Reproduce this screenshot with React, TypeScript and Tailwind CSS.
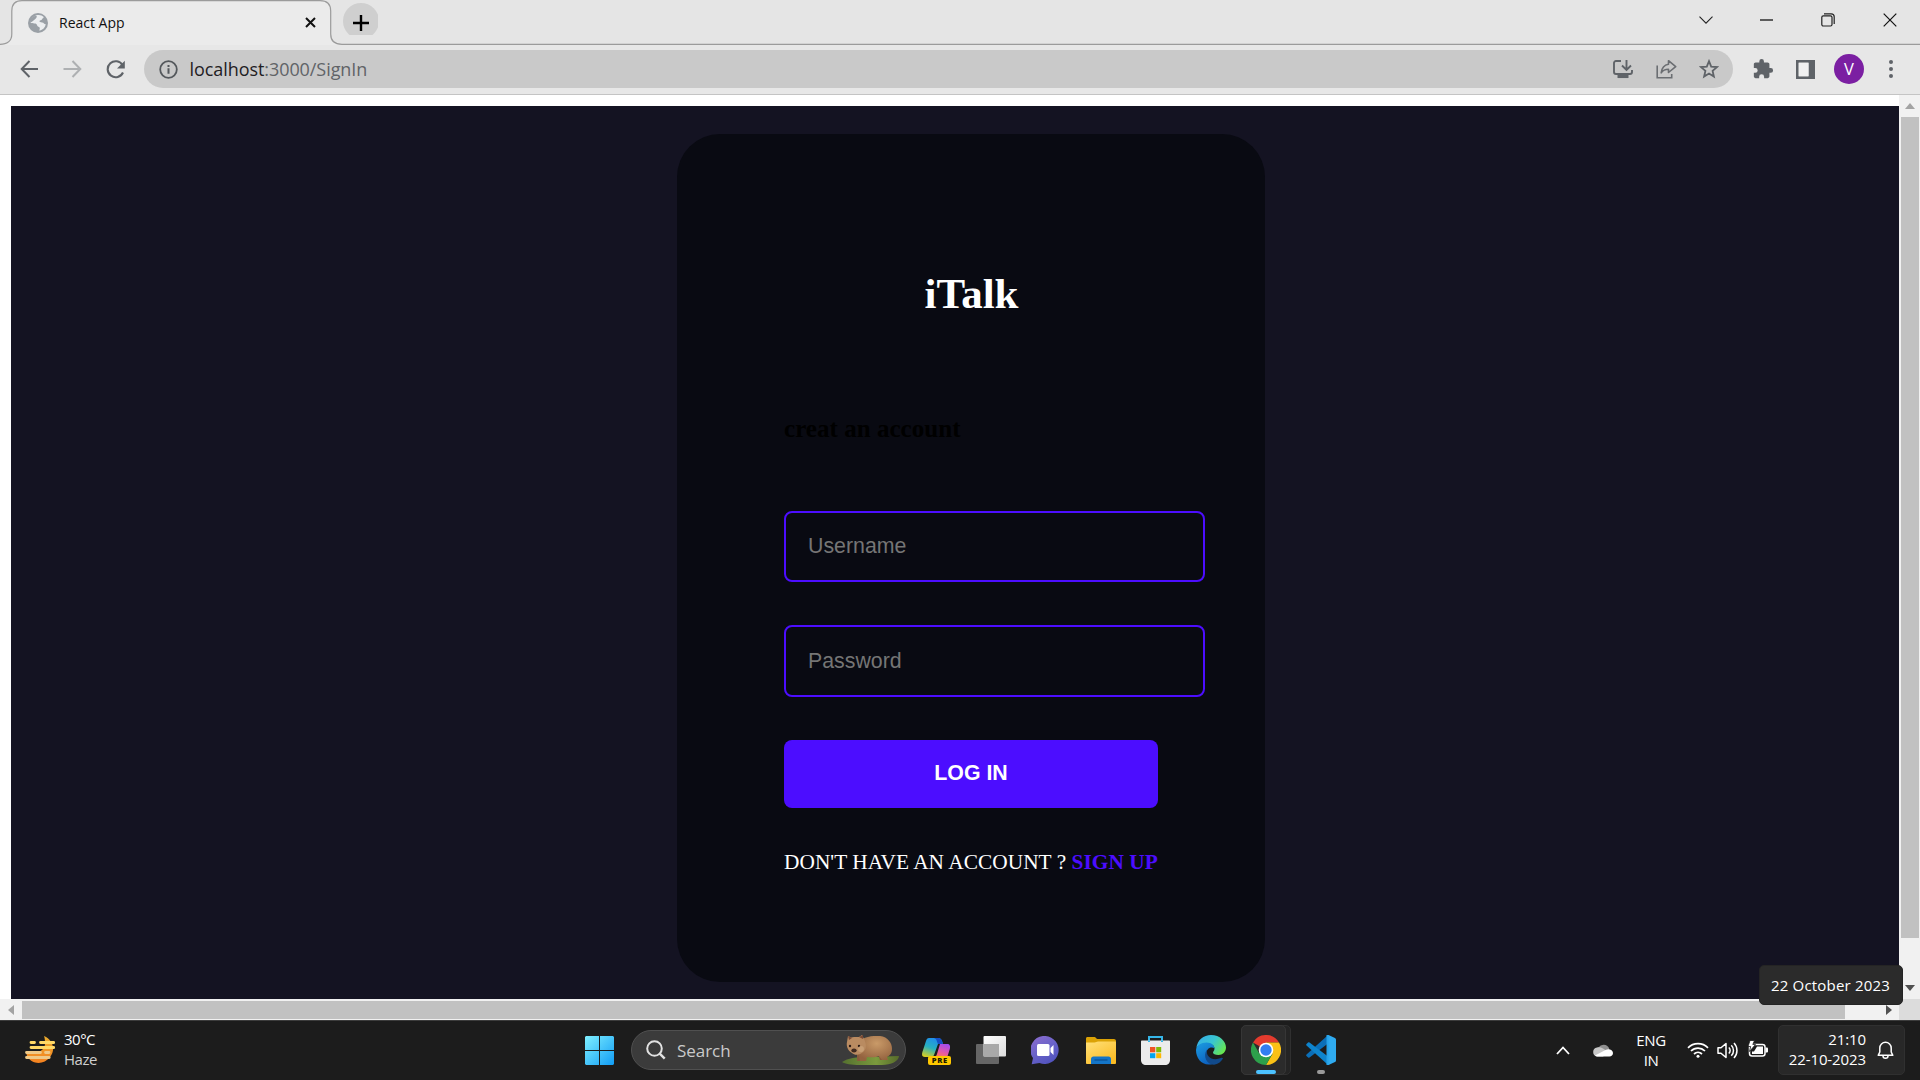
import React from "react";

const ui = "font-['Open_Sans','Noto_Sans',sans-serif]";

function TabStrip() {
  return (
    <div className="relative flex h-[45px] items-start bg-[#e5e5e5]">
      <svg className="absolute inset-0" width="1920" height="45" viewBox="0 0 1920 45">
        <path d="M0 44.5C7 44.5 11.8 41 11.8 34V11C11.8 4 15 .7 22 .7H320C327 .7 330.7 4 330.7 11V34C330.7 41 335 44.3 342 44.3H1920V45H0Z" fill="#ebebeb" />
        <path d="M0 44.3C7 44.3 11.8 41 11.8 34V11C11.8 4 15 .7 22 .7H320C327 .7 330.7 4 330.7 11V34C330.7 41 335 44.3 342 44.3H1920" fill="none" stroke="#9b9b9b" strokeWidth="1.2" />
      </svg>
      <div className="relative ml-[28px] flex h-[45px] w-[288px] items-center">
        <svg width="20" height="20" viewBox="0 0 20 20">
          <circle cx="10" cy="10" r="10" fill="#9aa0a6" />
          <path d="M8.3 2.3C11 1.4 14 2 15.7 4c-.4 1.6-1.300 1.200-1.800 2.500-.5 1.100-2 .6-2.400 1.600-.2 1 1 1.400 2.600 1.500 2 .2 1.800 1.700 3.700 1.600-.6 3.200-3 5.700-6.300 6.500-.3-1.200.600-2.100.2-3-.5-1-2.200-.6-2.500-2.100-.3-1.600-1-2.200-2.900-2.200-1.500 0-2.500-.2-3.900-.8C3 6.300 5 3.500 8.300 2.300Z" fill="#eceef0" />
          <path d="M8 2.500c1.500 1 .6 2.300-.2 2.900C6.600 6.300 5.600 7.500 4.600 8.200 3.600 8.700 3 9.400 2 9.400 2.400 6 4.600 3.400 8 2.500Z" fill="#9aa0a6" />
        </svg>
        <span className={`${ui} ml-[11px] text-[14px] tracking-[0px] text-[#111]`}>React App</span>
        <svg className="ml-auto" width="11" height="11" viewBox="0 0 11 11"><path d="M1 1l9 9M10 1l-9 9" stroke="#111" strokeWidth="2" /></svg>
      </div>
      <div className="relative ml-[27px] h-[35px] w-[35px] overflow-hidden">
        <svg className="mt-[3px]" width="35" height="32" viewBox="0 0 35 32"><circle cx="18" cy="18" r="18" fill="#cfcfcf" /></svg>
      </div>
      <svg className="relative -ml-[26px] mt-[14px]" width="18" height="18" viewBox="0 0 18 18"><path d="M9 1v16M1 9h16" stroke="#000" strokeWidth="2.4" /></svg>
      <div className="relative ml-auto mr-[23px] flex h-[39px] items-center">
        <svg width="14" height="8" viewBox="0 0 14 8"><path d="M.5 .7L7 7.200 13.500.7" fill="none" stroke="#222" strokeWidth="1.1" /></svg>
        <svg className="ml-[47px]" width="13" height="2" viewBox="0 0 13 2"><path d="M0 1h13" stroke="#111" strokeWidth="1.300" /></svg>
        <svg className="ml-[48px]" width="14" height="14" viewBox="0 0 14 14" fill="none" stroke="#222" strokeWidth="1.200"><rect x=".8" y="2.800" width="10.200" height="10.200" rx="1.500" /><path d="M3 .8h7.200c2 0 3 1 3 3V11" /></svg>
        <svg className="ml-[48px]" width="14" height="14" viewBox="0 0 14 14"><path d="M.7.7l12.600 12.600M13.300.7L.7 13.300" stroke="#111" strokeWidth="1.200" /></svg>
      </div>
    </div>
  );
}

function Toolbar() {
  return (
    <div className="flex h-[50px] items-center border-b border-[#c4c4c4] bg-[#e7e7e7] pb-px">
      <svg className="ml-[20px]" width="19" height="18" viewBox="0 0 19 18" fill="none" stroke="#5f6368" strokeWidth="2"><path d="M18 9H2M9.500 1L1.700 9l7.800 8" /></svg>
      <svg className="ml-[24px]" width="19" height="18" viewBox="0 0 19 18" fill="none" stroke="#aeb0b2" strokeWidth="2"><path d="M.5 9H17M9.500 1l7.800 8-7.800 8" /></svg>
      <svg className="ml-[23.5px]" width="20" height="19" viewBox="0 0 20 19"><path d="M16.600 5.200A8 8 0 1 0 17 12.500" fill="none" stroke="#5f6368" strokeWidth="2.100" /><path d="M18.800.8v7.700H11z" fill="#5f6368" /></svg>
      <div className="ml-[18.5px] flex h-[38px] w-[1589px] items-center rounded-full bg-[#c9c9c9] pl-[15px] pr-[14px]">
        <svg width="19" height="19" viewBox="0 0 19 19"><circle cx="9.500" cy="9.500" r="8.300" fill="none" stroke="#54585c" strokeWidth="1.800" /><path d="M9.500 8.300v5.400M9.500 4.900v2" stroke="#54585c" strokeWidth="2" /></svg>
        <span className={`${ui} ml-[11.5px] text-[18px] leading-[24px] tracking-[-0.07px] text-[#606367]`}><span className="text-[#1f2023]">localhost</span>:3000/SignIn</span>
        <svg className="ml-auto" width="20" height="20" viewBox="0 0 20 20" fill="none" stroke="#5f6368" strokeWidth="1.900"><path d="M8 2H3a2 2 0 0 0-2 2v9a2 2 0 0 0 2 2h14a2 2 0 0 0 2-2v-2" /><path d="M13.500 1v9.500M9 6.500l4.500 4.500L18 6.500" /><path d="M4.500 17.300h11" strokeWidth="3.500" /></svg>
        <svg className="ml-[23px]" width="21" height="20" viewBox="0 0 21 20" fill="none" stroke="#6b6e72" strokeWidth="1.600"><path d="M1.200 6.500v12.300h14.500V15" /><path d="M12.500 1.700l7.200 6-7.200 5.800V10.200c-3.500 0-5.700 1.100-7.300 3.700C5.700 9.300 8 6 12.500 5.300z" strokeLinejoin="round" /></svg>
        <svg className="ml-[22px]" width="20" height="20" viewBox="0 0 20 20"><path d="M10 2.200l2.200 5.400 5.800.5-4.400 3.800 1.300 5.700-4.900-3-4.900 3 1.300-5.700L2 8.100l5.800-.5z" fill="none" stroke="#5f6368" strokeWidth="1.800" /></svg>
      </div>
      <svg className="ml-[19px]" width="22" height="22" viewBox="0 0 24 24"><path d="M20.500 11H19V7c0-1.100-.9-2-2-2h-4V3.500a2.500 2.500 0 0 0-5 0V5H4c-1.100 0-2 .9-2 2v3.800h1.500a2.700 2.700 0 0 1 0 5.400H2V20c0 1.100.9 2 2 2h3.800v-1.500a2.700 2.700 0 0 1 5.400 0V22H17c1.100 0 2-.9 2-2v-4h1.500a2.500 2.500 0 0 0 0-5z" fill="#5f6368" /></svg>
      <svg className="ml-[22px]" width="19" height="19" viewBox="0 0 19 19"><path d="M0 0h19v19H0zM2.700 2.700v13.600h9.800V2.700z" fill="#5f6368" fillRule="evenodd" /><path d="M2.700 2.700h9.800v13.600H2.700z" fill="#f0f0f0" /></svg>
      <div className={`${ui} ml-[19px] flex size-[30px] items-center justify-center rounded-full bg-[#7b1fa2] text-[16.5px] text-white`}>V</div>
      <svg className="ml-[25px]" width="4" height="18" viewBox="0 0 4 18" fill="#5f6368"><circle cx="2" cy="2" r="2" /><circle cx="2" cy="9" r="2" /><circle cx="2" cy="16" r="2" /></svg>
    </div>
  );
}

function SignInCard() {
  const field = "flex w-[421px] items-center rounded-[8px] border-2 border-[#4c0dff] bg-transparent px-[22px] font-['Liberation_Sans',Arial,sans-serif] text-[21.33px] text-[#757575]";
  return (
    <div className="ml-[666px] mt-[28px] h-[848px] w-[588px] rounded-[43px] bg-[#090a12] px-[107px] font-['Liberation_Serif','Times_New_Roman',serif]">
      <h1 className="pl-px pt-[135px] text-center text-[43px] font-bold leading-[50px] text-white">iTalk</h1>
      <h3 className="mt-[95px] text-[25px] font-bold leading-[30px] tracking-[0.04px] text-black">creat an account</h3>
      <div className={`${field} mt-[67px] h-[71px] pt-px`}>Username</div>
      <div className={`${field} mt-[43px] h-[72px] pt-[2px]`}>Password</div>
      <div className="mt-[43px] flex h-[68px] w-[374px] items-center justify-center rounded-[8px] bg-[#4c0dff] pb-px font-['Liberation_Sans',Arial,sans-serif] text-[21.33px] font-bold text-white">LOG IN</div>
      <p className="mt-[42px] whitespace-nowrap text-[21.33px] leading-[24px] tracking-[0.045px] text-white">DON'T HAVE AN ACCOUNT ? <b className="text-[#4c0dff]">SIGN UP</b></p>
    </div>
  );
}

function VerticalScrollbar() {
  return (
    <div className="flex h-[904px] w-[21px] flex-col items-center bg-[#f1f1f1]">
      <svg className="mt-[8px]" width="10" height="6" viewBox="0 0 10 6"><path d="M0 6l5-6 5 6z" fill="#a3a3a3" /></svg>
      <div className="mt-[8px] h-[821px] w-[18px] bg-[#c1c1c1]" />
      <svg className="mt-[47px]" width="10" height="6" viewBox="0 0 10 6"><path d="M0 0l5 6 5-6z" fill="#505050" /></svg>
    </div>
  );
}

function HorizontalScrollbar() {
  return (
    <div className="flex h-[21px] bg-[#f1f1f1]">
      <svg className="ml-[8px] mt-[6px]" width="6" height="10" viewBox="0 0 6 10"><path d="M6 0v10L0 5z" fill="#a3a3a3" /></svg>
      <div className="ml-[8px] mt-[2px] h-[18px] w-[1823px] bg-[#c1c1c1]" />
      <svg className="ml-[41px] mt-[6px]" width="6" height="10" viewBox="0 0 6 10"><path d="M0 0v10l6-5z" fill="#505050" /></svg>
      <div className="ml-auto w-[21px] bg-[#dcdcdc]" />
    </div>
  );
}

function HazeIcon() {
  return (
    <svg width="30" height="29" viewBox="0 0 30 29">
      <defs><linearGradient id="sun" x1="0" y1="0" x2="0" y2="1"><stop offset="0" stopColor="#e9ac2e" /><stop offset="1" stopColor="#f58220" /></linearGradient></defs>
      <path d="M19 1c9 4 12 14 6 21-6 8-18 8-23-1l-1-4c7 3 19 0 19-8 0-3 0-5-1-8z" fill="url(#sun)" />
      <path d="M6 7.500h3.500M15.500 7.500h13.200M6 12.500h22.700" stroke="#ffd966" strokeWidth="2.800" strokeLinecap="round" />
      <path d="M1.500 17.500h14M20.500 17.500h3.500M1.500 22.500h22.700" stroke="#f0c987" strokeWidth="2.800" strokeLinecap="round" />
    </svg>
  );
}

function Wombat() {
  return (
    <svg width="58" height="32" viewBox="0 0 58 32">
      <defs>
        <radialGradient id="fur" cx=".55" cy=".3" r=".7"><stop offset="0" stopColor="#c99a68" /><stop offset="1" stopColor="#94633f" /></radialGradient>
        <linearGradient id="grass" x1="0" x2="1"><stop offset="0" stopColor="#55702f" /><stop offset=".6" stopColor="#7b9a3d" /><stop offset="1" stopColor="#576b2a" /></linearGradient>
      </defs>
      <path d="M0 28c6-4 14-5 26-5l31-1c0 5-8 9-17 9H18C9 31 3 30 0 28z" fill="url(#grass)" />
      <path d="M36 20h9l-1 6h-6zM15 20h9l-1 7h-8z" fill="#8a5b3b" />
      <path d="M16 9C21 2 30 2 38 2c8 1 12 7 12 13 0 5-3 7-5 8l1 3h-6l-3-4c-4 2-8 1-12 1l-1 4h-6l-1-6z" fill="url(#fur)" />
      <path d="M6 2l3 1.500L12 3h5l3-2 2 4c2 4 3 9 0 12-3 4-9 5-12 2C6 17 4 12 5 8z" fill="#b98b61" />
      <path d="M6 2l4 2-3 2zM21 1l-4 2 4 2z" fill="#7a4a35" />
      <circle cx="8" cy="12" r="1.200" fill="#2b1b16" /><circle cx="17" cy="12" r="1.200" fill="#2b1b16" />
      <ellipse cx="12" cy="16.500" rx="2.700" ry="2" fill="#402a20" />
      <circle cx="19" cy="15" r="3" fill="#d2ab80" opacity=".6" />
    </svg>
  );
}

function CopilotIcon() {
  return (
    <svg width="29" height="28" viewBox="0 0 29 28">
      <defs>
        <linearGradient id="cpA" x1=".6" y1="0" x2=".2" y2="1"><stop offset="0" stopColor="#208cec" /><stop offset=".5" stopColor="#27b0c0" /><stop offset="1" stopColor="#d9cf20" /></linearGradient>
        <linearGradient id="cpB" x1=".7" y1="0" x2=".3" y2="1"><stop offset="0" stopColor="#a34cf0" /><stop offset=".6" stopColor="#e558a8" /><stop offset="1" stopColor="#ff7a59" /></linearGradient>
      </defs>
      <path d="M7 0h9c3 0 4 2 5 6h-5l-4 11c-.5 1-1.500 2-3 2H3c-3 0-3.400-2-2.600-5L4 3c.6-2 1.400-3 3-3z" fill="url(#cpA)" />
      <path d="M12 0h4c3 0 4 2 5 6h-5c-1.500-3-1-5-4-6z" fill="#154fc4" />
      <path d="M18 6h7c3 0 3.500 2 2.800 5l-2.500 8H12c2 0 2.500-2 3-3z" fill="url(#cpB)" />
      <rect x="6" y="18" width="23" height="9" rx="2" fill="#ffc800" />
      <text x="17.800" y="25.300" textAnchor="middle" fontFamily="Open Sans, sans-serif" fontSize="7.600" fontWeight="800" letterSpacing=".7" fill="#201a00">PRE</text>
    </svg>
  );
}

function TaskViewIcon() {
  return (
    <svg width="30" height="28" viewBox="0 0 30 28">
      <defs><linearGradient id="tvA" x1="0" y1="0" x2="1" y2="1"><stop offset="0" stopColor="#fff" /><stop offset="1" stopColor="#dcdcdc" /></linearGradient></defs>
      <rect y="8" width="23" height="20" rx="1" fill="#666" />
      <rect x="7.500" width="22.500" height="20.500" rx="1" fill="url(#tvA)" />
      <path d="M7.500 8H23v12.500H7.500z" fill="#a9a9a9" />
    </svg>
  );
}

function ChatIcon() {
  return (
    <svg width="29" height="29" viewBox="0 0 29 29">
      <defs><linearGradient id="chat" x1=".1" y1="0" x2=".7" y2="1"><stop offset="0" stopColor="#8c6ccf" /><stop offset=".5" stopColor="#6a63c8" /><stop offset="1" stopColor="#5052bd" /></linearGradient></defs>
      <path d="M14.500 0a14 14 0 1 1-6 27L.7 28.200 2 22A14 14 0 0 1 14.500 0z" fill="url(#chat)" />
      <rect x="6" y="8" width="12.500" height="12" rx="1.500" fill="#fff" />
      <path d="M19.500 12l3-3v10l-3-3z" fill="#fff" />
    </svg>
  );
}

function ExplorerIcon() {
  return (
    <svg width="30" height="27" viewBox="0 0 30 27">
      <defs><linearGradient id="fold" x1="0" y1="0" x2=".7" y2="1"><stop offset="0" stopColor="#ffe07a" /><stop offset="1" stopColor="#fbbc24" /></linearGradient></defs>
      <path d="M0 1.500C0 .7.600 0 1.500 0h7c1 0 2 2 3 2H28c1 0 2 .8 2 2v4H0z" fill="#dba206" />
      <path d="M0 5.500h8.500c1.500 0 2-1 3.500-1h17c.6 0 1 .5 1 1V26c0 .5-.5 1-1 1H1c-.5 0-1-.5-1-1z" fill="url(#fold)" />
      <path d="M5 27v-5c0-1.600 1-2.500 2.500-2.500h15c1.500 0 2.500 1 2.500 2.500v5z" fill="#1475c8" />
      <path d="M8.500 23h13" stroke="#0b4f91" strokeWidth="1.200" />
    </svg>
  );
}

function StoreIcon() {
  return (
    <svg width="29" height="29" viewBox="0 0 29 29">
      <path d="M8 6V1h13v5" fill="none" stroke="#35b6e8" strokeWidth="2" />
      <path d="M1 4.500h27c.6 0 1 .4 1 1V24c0 3-2 5-5 5H5c-3 0-5-2-5-5V5.500c0-.6.4-1 1-1z" fill="#ececec" />
      <path d="M9 11h5.300v5.300H9z" fill="#f05323" /><path d="M15.200 11h5v5.300h-5z" fill="#80ba05" /><path d="M9 17.200h5.300v5H9z" fill="#05a4ee" /><path d="M15.200 17.200h5v5h-5z" fill="#feb802" />
      <path d="M8 4.500V6M21 4.500V6" stroke="#35b6e8" strokeWidth="2" />
    </svg>
  );
}

function EdgeIcon() {
  return (
    <svg width="30" height="30" viewBox="0 0 30 30">
      <defs>
        <linearGradient id="edA" x1="0" y1=".2" x2="1" y2=".7"><stop offset="0" stopColor="#35aee8" /><stop offset=".5" stopColor="#39c5d0" /><stop offset="1" stopColor="#69e84c" /></linearGradient>
        <linearGradient id="edB" x1="0" y1="0" x2=".5" y2="1"><stop offset="0" stopColor="#1b9de2" /><stop offset="1" stopColor="#0d62c0" /></linearGradient>
      </defs>
      <path d="M.3 13C1.500 5 7.500 0 15 0c9 0 15 6.500 15 12.500 0 4.500-3.500 7.500-7.500 7.500-3.500 0-5.500-1.300-5.500-2.500 0-1 1.500-1.500 1.500-4C18.500 11 16 8.500 11.500 8.500 6 8.500 2 10.500.3 13z" fill="url(#edA)" />
      <path d="M0 15C.5 10.500 5 7.600 10.500 7.600c5 0 8 3 8 6-2-2.400-8-1-8 4.400 0 6 5 9.500 9 10C8 33 0 25 0 15z" fill="url(#edB)" />
      <path d="M11 14.500c-1.500 7 5 12 14 8.500.8-.4 1.500-.2 2 .5-2 3.500-5 5.500-9 6.300C10.500 29.500 6.500 21 11 14.500z" fill="#114a8b" />
    </svg>
  );
}

function ChromeIcon() {
  return (
    <svg width="30" height="30" viewBox="0 0 30 30">
      <path d="M15 15L2 7.500A15 15 0 0 1 28 7.500H15z" fill="#e33b2e" />
      <path d="M15 15l6.500 3.750L15 30A15 15 0 0 0 28 7.500H15z" fill="#fbc116" />
      <path d="M2 7.500A15 15 0 0 0 15 30l6.500-11.250L15 15 8.500 18.750z" fill="#2da04b" />
      <circle cx="15" cy="15" r="7.300" fill="#fff" /><circle cx="15" cy="15" r="5.700" fill="#327ef0" />
    </svg>
  );
}

function CodeIcon() {
  return (
    <svg width="30" height="30" viewBox="0 0 30 30">
      <path d="M22 8.500L3.500 22.500c-.5.300-1 .3-1.400 0l-1.600-1.400c-.5-.5-.5-1.200 0-1.700L21 1z" fill="#0b6fb8" />
      <path d="M22 21.500L3.500 7.500c-.5-.3-1-.3-1.400 0L.5 8.900c-.5.500-.5 1.200 0 1.700L21 29z" fill="#0e84cd" />
      <path d="M21 .3c.4-.3 1-.4 1.500-.2L29 3c.6.300 1 .9 1 1.600v20.800c0 .7-.4 1.300-1 1.600l-6.500 2.900c-.5.200-1.100.1-1.500-.2.500.2 1-.1 1-.8V1.100c0-.7-.5-1-1-.8z" fill="#2fabf0" />
      <path d="M20.500 0h2v30h-2z" fill="#27a3e8" />
    </svg>
  );
}

function Taskbar() {
  return (
    <div className={`${ui} flex h-[60px] border-t border-[#3c3c3c] bg-[#1c1c1c] text-[15px] leading-[20px] text-white`}>
      <div className="flex w-[585px] pl-[25px]">
        <div className="mt-[14px]"><HazeIcon /></div>
        <div className="ml-[9px] mt-[8px] tracking-[-0.5px]"><div>30°C</div><div className="text-[#cfcfcf]">Haze</div></div>
      </div>
      <svg className="mt-[15px]" width="29" height="29" viewBox="0 0 29 29">
        <defs><linearGradient id="win" x1="0" y1="0" x2="1" y2="1"><stop offset="0" stopColor="#7ff0ff" /><stop offset="1" stopColor="#119cf5" /></linearGradient></defs>
        <path d="M1 0h13v14H0V1zM15 0h13l1 1v13H15zM0 15h14v14H1l-1-1zM15 15h14v13l-1 1H15z" fill="url(#win)" />
      </svg>
      <div className="ml-[17px] mt-[9px] flex h-[40px] w-[275px] items-center rounded-full border border-[#505050] bg-[#3b3b3b] pl-[14px] pr-[5px]">
        <svg width="20" height="20" viewBox="0 0 20 20" fill="none" stroke="#e2e2e2" strokeWidth="2"><circle cx="8.500" cy="8.500" r="7.300" /><path d="M13.700 13.700l5 5" strokeWidth="2.400" /></svg>
        <span className="ml-[11px] mt-[2px] text-[17px] tracking-[-0.05px] text-[#cacaca]">Search</span>
        <div className="ml-auto"><Wombat /></div>
      </div>
      <div className="ml-[16px] mt-[17px]"><CopilotIcon /></div>
      <div className="ml-[25px] mt-[15px]"><TaskViewIcon /></div>
      <div className="ml-[25px] mt-[15px]"><ChatIcon /></div>
      <div className="ml-[26px] mt-[16px]"><ExplorerIcon /></div>
      <div className="ml-[25px] mt-[15px]"><StoreIcon /></div>
      <div className="ml-[26px] mt-[14px]"><EdgeIcon /></div>
      <div className="ml-[15px] mt-[4px] h-[50px] w-[50px] rounded-[5px] border border-[#303030] bg-[#242424]">
        <div className="-ml-px -mt-px flex h-[50px] w-[45px] flex-col items-center rounded-[5px] border border-[#363636] bg-[#2b2b2b] pl-[4px] pt-[9px]">
          <ChromeIcon />
          <div className="mt-[5px] h-[4px] w-[20px] rounded-full bg-[#4cc2ff]" />
        </div>
      </div>
      <div className="ml-[15px] mt-[14px] flex flex-col items-center"><CodeIcon /><div className="mt-[5px] h-[4px] w-[8px] rounded-full bg-[#9a9a9a]" /></div>
      <svg className="ml-auto mt-[25px]" width="14" height="9" viewBox="0 0 14 9"><path d="M1 8l6-6.500L13 8" fill="none" stroke="#fff" strokeWidth="1.800" /></svg>
      <svg className="ml-[23px] mt-[22px]" width="20" height="14" viewBox="0 0 20 14"><path d="M5.500 4.500A6 6 0 0 1 16 5l1 5H4z" fill="#8f8f8f" /><path d="M4 13.500A4.500 4.500 0 0 1 4 4.600c2-.5 4-.2 6 1l6 4-6 3.900z" fill="#c7c7c7" /><path d="M2 12.500L13 6.800c3-1.400 7 .2 7 3.200 0 2-1.600 3.500-3.500 3.500H4.200c-.8 0-1.600-.3-2.200-1z" fill="#fff" /></svg>
      <div className="ml-[22px] mt-[9px] w-[32px] text-center tracking-[-0.4px]"><div>ENG</div><div>IN</div></div>
      <svg className="ml-[20px] mt-[20px]" width="22" height="18" viewBox="0 0 22 18" fill="none" stroke="#fff" strokeWidth="1.700"><path d="M1 6.800a14 14 0 0 1 20 0M4 10a10 10 0 0 1 14 0M7 13a6 6 0 0 1 8 0" /><circle cx="11" cy="15.200" r="1.500" fill="#fff" stroke="none" /></svg>
      <svg className="ml-[8px] mt-[21px]" width="21" height="17" viewBox="0 0 21 17" fill="none" stroke="#fff" strokeWidth="1.500"><path d="M1 5.800h3l5-4.300v14l-5-4.300H1z" strokeLinejoin="round" /><path d="M11.800 5.500a4 4 0 0 1 0 6M14.300 3.200a7.500 7.500 0 0 1 0 10.600M17 1a11 11 0 0 1 0 15" /></svg>
      <svg className="ml-[10px] mt-[19px]" width="20" height="18" viewBox="0 0 20 18"><rect x="1.500" y="4.500" width="15.500" height="11.500" rx="2.500" fill="none" stroke="#fff" strokeWidth="1.500" /><path d="M9 6.500h6v7.500H4v-2.500h2z" fill="#fff" /><path d="M17.500 7.500H19a1 1 0 0 1 1 1v3a1 1 0 0 1-1 1h-1.500z" fill="#fff" /><path d="M2 .5L0 6.500h2.600L1.500 11.500 7.500 4.500H4.800L6.500.5z" fill="#fff" stroke="#1c1c1c" strokeWidth=".8" /></svg>
      <div className="ml-[10px] mr-[15px] mt-[4px] flex h-[50px] w-[127px] rounded-[5px] border border-[#303030] bg-[#282828] pl-[8px]">
        <div className="mt-[3px] flex w-[79px] flex-col items-end whitespace-nowrap tracking-[-0.1px]"><div>21:10</div><div>22-10-2023</div></div>
        <svg className="ml-[11px] mt-[15px]" width="17" height="19" viewBox="0 0 17 19" fill="none" stroke="#fff" strokeWidth="1.500"><path d="M1.200 14.300L2.800 11V7a5.700 5.700 0 0 1 11.400 0v4l1.600 3.300z" strokeLinejoin="round" /><path d="M6 15c0 3 5 3 5 0" /></svg>
      </div>
    </div>
  );
}

export default function App() {
  return (
    <div className="relative flex h-[1080px] w-[1920px] flex-col overflow-hidden bg-white">
      <TabStrip />
      <Toolbar />
      <div className="flex h-[904px]">
        <div className="w-[1899px] pl-[11px] pt-[11px]">
          <div className="flex h-[893px] items-start bg-[#141322]"><SignInCard /></div>
        </div>
        <VerticalScrollbar />
      </div>
      <HorizontalScrollbar />
      <Taskbar />
      <div className={`${ui} absolute left-[1759px] top-[965px] flex h-[40px] w-[144px] items-center justify-center whitespace-nowrap rounded-[5px] border border-[#242424] bg-[#2b2b2b] pr-px pt-px text-[15px] tracking-[0.2px] text-white`}>22 October 2023</div>
    </div>
  );
}
